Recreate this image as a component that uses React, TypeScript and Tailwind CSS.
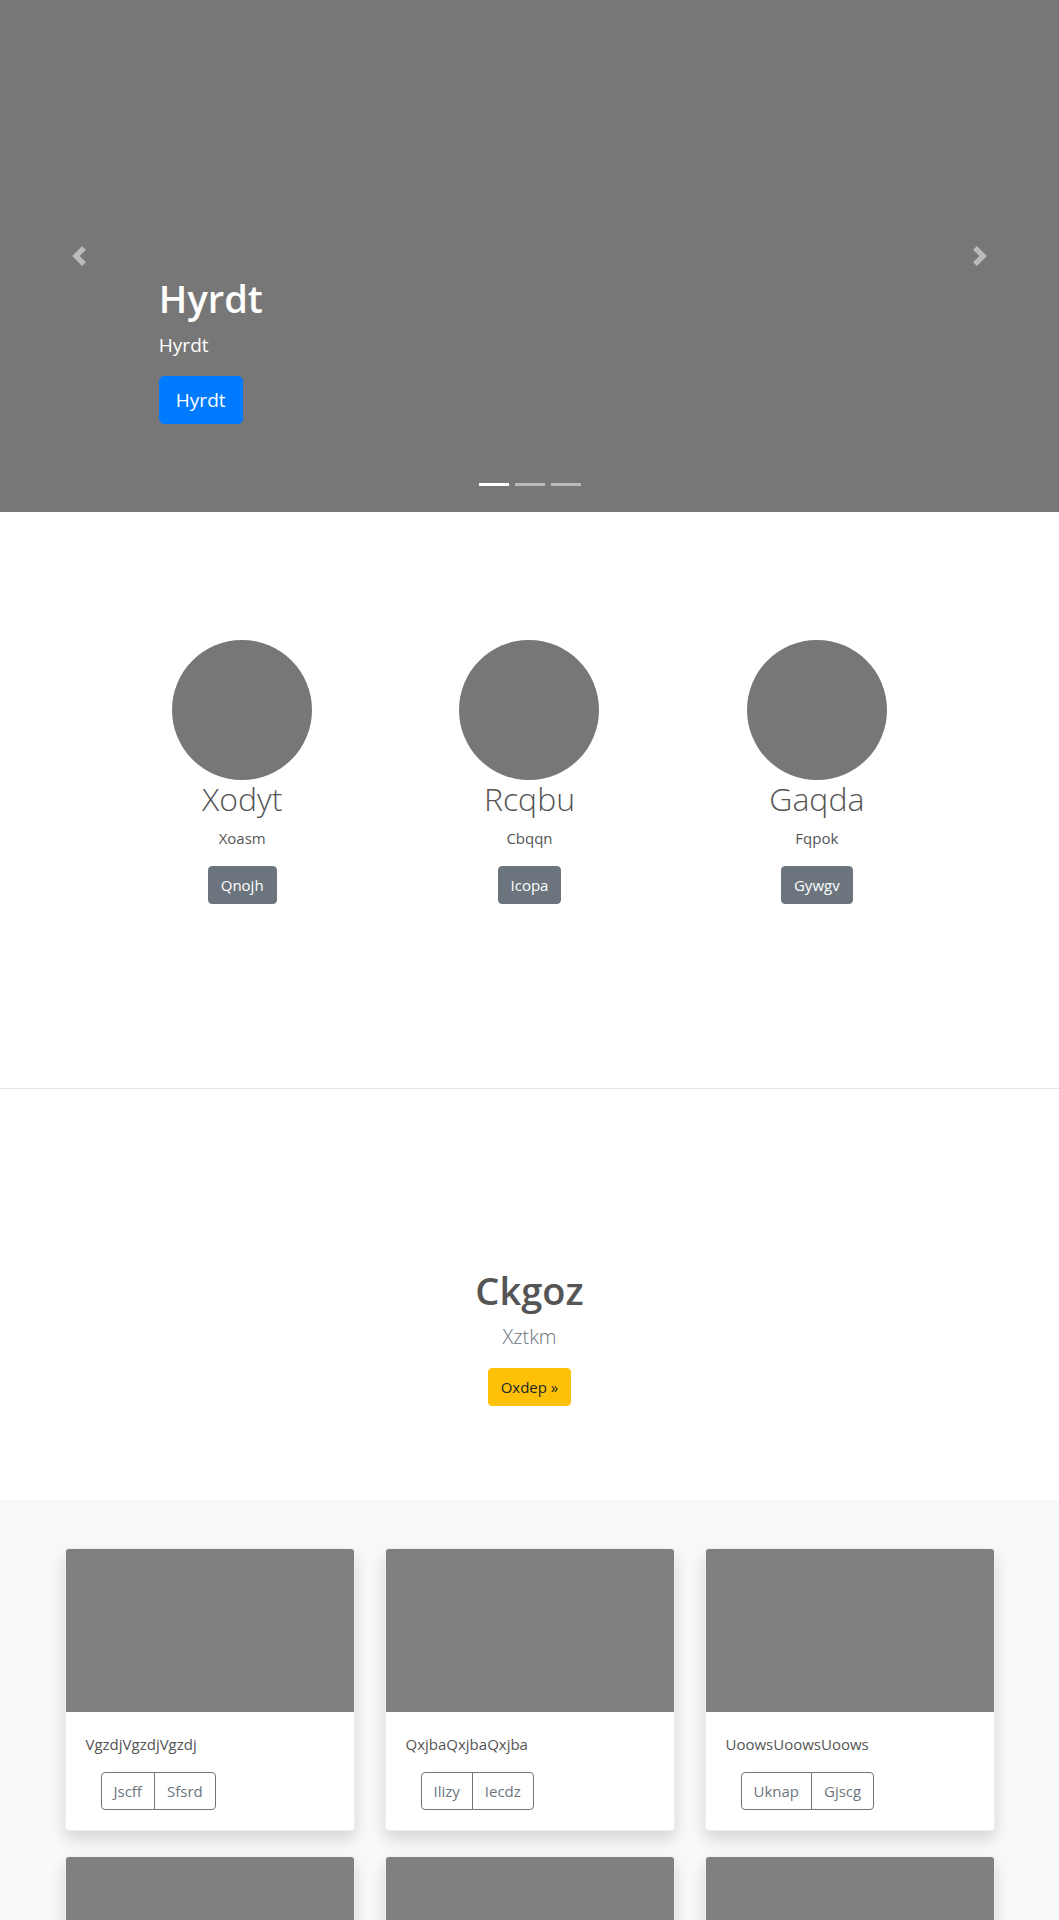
import React from "react";

const FONT = { fontFamily: '"Segoe UI", "Open Sans", "Noto Sans", sans-serif' };

function Chevron({ dir }: { dir: "prev" | "next" }) {
  return (
    <svg width="20" height="20" viewBox="0 0 8 8" fill="#fff" aria-hidden>
      {dir === "prev" ? (
        <path d="M5.25 0l-4 4 4 4 1.5-1.5L4.25 4l2.5-2.5L5.25 0z" />
      ) : (
        <path d="M2.75 0l-1.5 1.5L3.75 4l-2.5 2.5L2.75 8l4-4-4-4z" />
      )}
    </svg>
  );
}

const people = [
  { name: "Xodyt", sub: "Xoasm", btn: "Qnojh" },
  { name: "Rcqbu", sub: "Cbqqn", btn: "Icopa" },
  { name: "Gaqda", sub: "Fqpok", btn: "Gywgv" },
];

const cards = [
  { text: "VgzdjVgzdjVgzdj", a: "Jscff", b: "Sfsrd" },
  { text: "QxjbaQxjbaQxjba", a: "Ilizy", b: "Iecdz" },
  { text: "UoowsUoowsUoows", a: "Uknap", b: "Gjscg" },
];

export default function App() {
  return (
    <div className="w-full h-[1920px] overflow-hidden bg-white text-[#555] text-[16px] leading-[1.5]" style={FONT}>
      {/* Hero carousel */}
      <div className="relative h-[512px] bg-[#777] overflow-hidden">
        <div className="absolute left-0 top-0 h-full w-[15%] flex items-center justify-center opacity-50">
          <Chevron dir="prev" />
        </div>
        <div className="absolute right-0 top-0 h-full w-[15%] flex items-center justify-center opacity-50">
          <Chevron dir="next" />
        </div>
        <div className="absolute left-[15%] right-[15%] bottom-[52px] pb-[20px] text-white text-left">
          <h1 className="text-[38px] font-semibold leading-[48px] mb-[8px]">Hyrdt</h1>
          <p className="text-[19px] leading-[30px] mb-[16px]">Hyrdt</p>
          <p className="mb-[16px]">
            <a className="inline-block bg-[#007bff] text-white text-[19px] leading-[30px] px-[16px] py-[8px] border border-[#007bff] rounded-[5px]">
              Hyrdt
            </a>
          </p>
        </div>
        <div className="absolute left-0 right-0 bottom-[26px] flex justify-center">
          <span className="block w-[30px] h-[3px] mx-[3px] bg-white" />
          <span className="block w-[30px] h-[3px] mx-[3px] bg-white opacity-50" />
          <span className="block w-[30px] h-[3px] mx-[3px] bg-white opacity-50" />
        </div>
      </div>

      {/* Marketing */}
      <div className="h-[576px] pt-[128px]">
        <div className="w-[862px] mx-auto flex">
          {people.map((p) => (
            <div key={p.name} className="flex-1 flex flex-col items-center text-center">
              <div className="w-[140px] h-[140px] rounded-full bg-[#777]" />
              <h2 className="text-[32px] font-light leading-[38px] mb-[8px] text-[#555]">{p.name}</h2>
              <p className="text-[15px] leading-[24px] mb-[16px] text-[#555]">{p.sub}</p>
              <p className="mb-[16px]">
                <a className="inline-block bg-[#6c757d] text-white text-[15px] leading-[24px] px-[12px] py-[6px] border border-[#6c757d] rounded-[4px]">
                  {p.btn}
                </a>
              </p>
            </div>
          ))}
        </div>
      </div>

      <hr className="border-0 border-t border-black/10 m-0" />

      {/* Featurette */}
      <div className="h-[411px] pt-[177px] text-center">
        <h2 className="text-[38px] font-semibold leading-[48px] mb-[8px] text-[#555]">Ckgoz</h2>
        <p className="text-[20px] font-light leading-[30px] mb-[16px] text-[#6c757d]">Xztkm</p>
        <p>
          <a className="inline-block bg-[#ffc107] text-[#212529] text-[15px] leading-[24px] px-[12px] py-[6px] border border-[#ffc107] rounded-[4px]">
            Oxdep »
          </a>
        </p>
      </div>

      {/* Album */}
      <div className="bg-[#f8f9fa] pt-[48px] pb-[48px]">
        <div className="w-[930px] mx-auto grid grid-cols-3 gap-x-[30px] gap-y-[25px]">
          {cards.map((c) => (
            <div
              key={c.text}
              className="bg-white rounded-[4px] border border-black/[0.06] overflow-hidden shadow-[0_8px_16px_rgba(0,0,0,0.15)]"
            >
              <div className="h-[163px] bg-[#808080]" />
              <div className="p-[20px]">
                <p className="text-[15px] leading-[24px] mb-[16px] text-[#555]">{c.text}</p>
                <div className="inline-flex ml-[15px]">
                  <button className="text-[#6c757d] text-[15px] leading-[24px] px-[12px] py-[6px] border border-[#6c757d] rounded-l-[4px]">
                    {c.a}
                  </button>
                  <button className="-ml-px text-[#6c757d] text-[15px] leading-[24px] px-[12px] py-[6px] border border-[#6c757d] rounded-r-[4px]">
                    {c.b}
                  </button>
                </div>
              </div>
            </div>
          ))}
          {[0, 1, 2].map((i) => (
            <div
              key={i}
              className="bg-white rounded-[4px] border border-black/[0.06] overflow-hidden shadow-[0_8px_16px_rgba(0,0,0,0.15)]"
            >
              <div className="h-[163px] bg-[#808080]" />
              <div className="h-[118px]" />
            </div>
          ))}
        </div>
      </div>
    </div>
  );
}
